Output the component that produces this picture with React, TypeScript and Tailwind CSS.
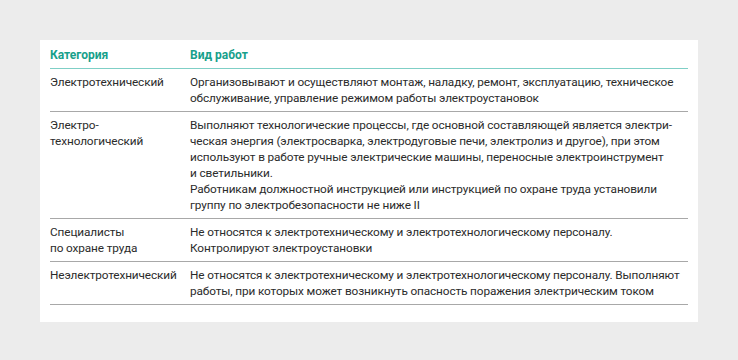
import React from "react";

const rows: { cat: string[]; work: string[] }[] = [
  {
    cat: ["Электротехнический"],
    work: [
      "Организовывают и осуществляют монтаж, наладку, ремонт, эксплуатацию, техническое",
      "обслуживание, управление режимом работы электроустановок",
    ],
  },
  {
    cat: ["Электро-", "технологический"],
    work: [
      "Выполняют технологические процессы, где основной составляющей является электри-",
      "ческая энергия (электросварка, электродуговые печи, электролиз и другое), при этом",
      "используют в работе ручные электрические машины, переносные электроинструмент",
      "и светильники.",
      "Работникам должностной инструкцией или инструкцией по охране труда установили",
      "группу по электробезопасности не ниже II",
    ],
  },
  {
    cat: ["Специалисты", "по охране труда"],
    work: [
      "Не относятся к электротехническому и электротехнологическому персоналу.",
      "Контролируют электроустановки",
    ],
  },
  {
    cat: ["Неэлектротехнический"],
    work: [
      "Не относятся к электротехническому и электротехнологическому персоналу. Выполняют",
      "работы, при которых может возникнуть опасность поражения электрическим током",
    ],
  },
];

export default function App() {
  return (
    <div
      className="w-[738px] h-[360px] bg-[#ececec] pt-[40px] pl-[40px]"
      style={{ fontFamily: 'Roboto, "Noto Sans", sans-serif' }}
    >
      <div className="w-[658px] bg-white px-[10px] pt-[7px] pb-[17px] text-[11.8px] leading-[16px] tracking-[-0.12px] text-[#2b2b2b]">
        <div className="flex pb-[5px] border-b border-[#7fcfc6] font-bold text-[12px] tracking-normal text-[#17a08b]">
          <div className="w-[140px] shrink-0">Категория</div>
          <div className="flex-1">Вид работ</div>
        </div>
        {rows.map((r, i) => (
          <div key={i} className="flex py-[5px] border-b border-[#a8a8a8]">
            <div className="w-[140px] shrink-0">
              {r.cat.map((c, j) => (
                <div key={j} className="whitespace-nowrap">{c}</div>
              ))}
            </div>
            <div className="flex-1">
              {r.work.map((w, j) => (
                <div key={j} className="whitespace-nowrap">{w}</div>
              ))}
            </div>
          </div>
        ))}
      </div>
    </div>
  );
}
